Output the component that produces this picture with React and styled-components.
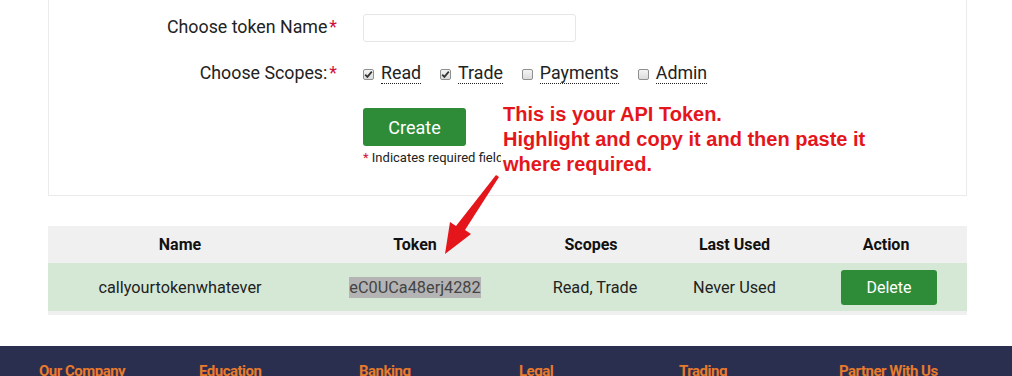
import React from 'react';
import styled, { createGlobalStyle } from 'styled-components';

const scopes = [
    { name: 'Read', checked: true },
    { name: 'Trade', checked: true },
    { name: 'Payments', checked: false },
    { name: 'Admin', checked: false },
];

const footerLinks = ['Our Company', 'Education', 'Banking', 'Legal', 'Trading', 'Partner With Us'];

function CheckBox({ checked }) {
    return (
        <Box>
            {checked && (
                <svg width="9" height="9" viewBox="0 0 9 9">
                    <path d="M1.2 4.6 L3.4 6.9 L7.8 1.6" fill="none" stroke="#333" strokeWidth="1.7" />
                </svg>
            )}
        </Box>
    );
}

export default function App() {
    return (
        <React.Fragment>
            <GlobalStyle />
            <Page>
                <Card>
                    <FormRow>
                        <Label>Choose token Name<Star>*</Star></Label>
                        <TextInput type="text" />
                    </FormRow>
                    <FormRow $top={18}>
                        <Label>Choose Scopes:<Star>*</Star></Label>
                        <Scopes>
                            {scopes.map(s => (
                                <Scope key={s.name}>
                                    <CheckBox checked={s.checked} />
                                    <ScopeName>{s.name}</ScopeName>
                                </Scope>
                            ))}
                        </Scopes>
                    </FormRow>
                    <FormRow $top={20}>
                        <span />
                        <div>
                            <CreateButton>Create</CreateButton>
                            <Note><Star>*</Star> Indicates required field</Note>
                        </div>
                    </FormRow>
                </Card>

                <Table>
                    <thead>
                        <tr>
                            <Th style={{ width: 264 }}>Name</Th>
                            <Th style={{ width: 206 }}>Token</Th>
                            <Th style={{ width: 146 }}>Scopes</Th>
                            <Th style={{ width: 141 }}>Last Used</Th>
                            <Th>Action</Th>
                        </tr>
                    </thead>
                    <tbody>
                        <Row>
                            <Td>callyourtokenwhatever</Td>
                            <Td><Highlight>eC0UCa48erj4282</Highlight></Td>
                            <Td $shift={4}>Read, Trade</Td>
                            <Td>Never Used</Td>
                            <Td><DeleteButton>Delete</DeleteButton></Td>
                        </Row>
                    </tbody>
                </Table>

                <Callout>
                    This is your API Token.<br />
                    Highlight and copy it and then paste it<br />
                    where required.
                </Callout>
                <Arrow width="70" height="90" viewBox="0 0 70 90">
                    <path d="M55 3 L58 5 L24 58 L30 62 L4 82 L9 50 L15 54 Z" fill="#e5161b" />
                </Arrow>
            </Page>

            <Footer>
                {footerLinks.map(l => <FooterHeading key={l}>{l}</FooterHeading>)}
            </Footer>
        </React.Fragment>
    );
}

const GlobalStyle = createGlobalStyle`
    body {
        margin: 0;
        background: #fff;
        font-family: Roboto, "Noto Sans", sans-serif;
        color: #222;
        overflow: hidden;
    }
`;

const Page = styled.div`
    position: relative;
    padding: 0 45px 31px 48px;
`;

const Card = styled.div`
    width: 919px;
    box-sizing: border-box;
    border: 1px solid #ebebeb;
    border-top: none;
    padding: 14px 0 29px;
`;

const FormRow = styled.div`
    display: grid;
    grid-template-columns: 288px 1fr;
    column-gap: 26px;
    align-items: center;
    margin-top: ${p => p.$top || 0}px;
`;

const Label = styled.label`
    text-align: right;
    font-size: 17.8px;
    line-height: 22px;
    padding-bottom: 3px;
    color: #222;
`;

const Star = styled.span`
    color: #d0103a;
    margin-left: 2px;
`;

const TextInput = styled.input`
    width: 213px;
    height: 28px;
    box-sizing: border-box;
    border: 1px solid #e6e6e6;
    border-radius: 3px;
    outline: none;
`;

const Scopes = styled.div`
    display: flex;
    align-items: center;
    gap: 19px;
    height: 28px;
`;

const Scope = styled.div`
    display: flex;
    align-items: center;
    gap: 7px;
`;

const Box = styled.span`
    width: 11px;
    height: 11px;
    box-sizing: border-box;
    border: 1px solid #8f8f8f;
    border-radius: 2px;
    background: linear-gradient(#f4f4f4, #dcdcdc);
    display: flex;
    align-items: center;
    justify-content: center;
`;

const ScopeName = styled.span`
    font-size: 17.8px;
    line-height: 21px;
    border-bottom: 1px dotted #222;
    margin-bottom: 2px;
`;

const CreateButton = styled.button`
    width: 103px;
    height: 38px;
    border: none;
    border-radius: 3px;
    background: #2e8b38;
    color: #fff;
    font-family: Roboto, sans-serif;
    font-size: 18px;
`;

const Note = styled.div`
    margin-top: 4px;
    font-size: 13px;
    line-height: 16px;
    color: #222;

    ${Star} {
        margin-left: 0;
    }
`;

const Table = styled.table`
    margin-top: 30px;
    width: 919px;
    border-collapse: collapse;
    border-bottom: 4px solid #f0f0f0;
`;

const Th = styled.th`
    background: #f0f0f0;
    height: 37px;
    padding: 0;
    font-size: 16px;
    font-weight: 700;
    line-height: 18px;
    color: #111;
    text-align: center;
`;

const Row = styled.tr`
    background: #d5e8d6;
`;

const Td = styled.td`
    height: 48px;
    padding: 0 0 0 ${p => (p.$shift || 0) * 2}px;
    font-size: 16.3px;
    color: #222;
    text-align: center;
`;

const Highlight = styled.span`
    background: #b4b4b4;
    color: #444;
    padding: 1px 0;
`;

const DeleteButton = styled.button`
    width: 96px;
    height: 35px;
    margin-left: 6px;
    border: none;
    border-radius: 3px;
    background: #2e8b38;
    color: #fff;
    font-family: Roboto, sans-serif;
    font-size: 16px;
`;

const Callout = styled.div`
    position: absolute;
    left: 501px;
    top: 102px;
    padding-left: 2px;
    background: #fff;
    font-family: "Liberation Sans", Arial, sans-serif;
    font-weight: 700;
    font-size: 20px;
    line-height: 25px;
    color: #e5161b;
`;

const Arrow = styled.svg`
    position: absolute;
    left: 441px;
    top: 172px;
`;

const Footer = styled.footer`
    background: #2a2f50;
    height: 60px;
    padding: 16px 0 0 39px;
    display: grid;
    grid-template-columns: repeat(6, 160px);
    align-items: start;
`;

const FooterHeading = styled.h4`
    margin: 0;
    font-family: Roboto, sans-serif;
    font-size: 15px;
    font-weight: 700;
    letter-spacing: -0.5px;
    color: #e87a2c;
`;
